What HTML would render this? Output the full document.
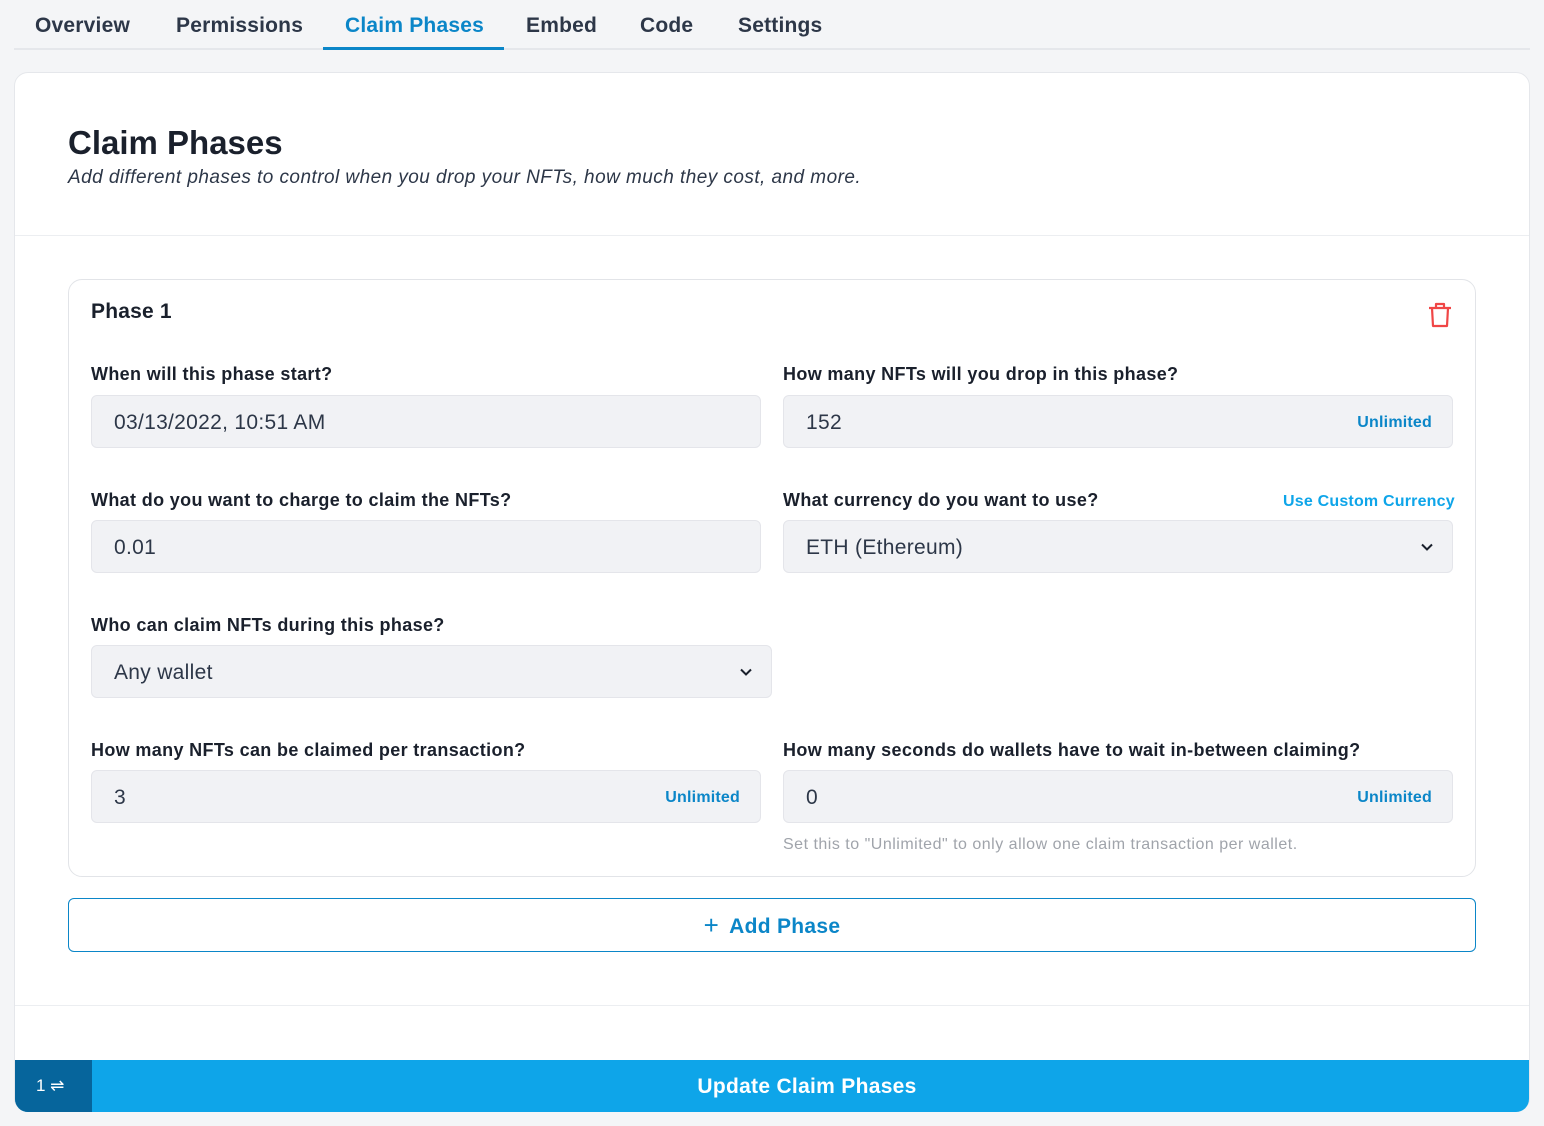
<!DOCTYPE html>
<html><head><meta charset="utf-8">
<style>
*{box-sizing:border-box;margin:0;padding:0}
body{width:1544px;height:1126px;background:#f4f5f7;font-family:"Liberation Sans",sans-serif;position:relative;overflow:hidden;color:#1a202c}
.a{position:absolute}
.tab{position:absolute;top:14px;font-size:21px;font-weight:600;color:#2d3748;letter-spacing:0.2px}
.card{left:14px;top:72px;width:1516px;height:1040px;background:#fff;border:1px solid #e5e7eb;border-radius:14px;overflow:hidden}
.lbl{position:absolute;font-size:18px;font-weight:700;color:#1a202c;letter-spacing:0.35px}
.inp{position:absolute;height:53px;background:#f1f2f5;border:1px solid #e4e5ea;border-radius:6px;font-size:21px;color:#2d3748;padding-left:22px;line-height:53px;letter-spacing:0.3px}
.unl{position:absolute;right:20px;top:0;font-size:16px;font-weight:700;color:#0b86c8;letter-spacing:0.2px}
.chev{position:absolute;right:18px;top:19px}
</style></head><body>
<div class="tab" style="left:35px">Overview</div>
<div class="tab" style="left:176px">Permissions</div>
<div class="tab" style="left:345px;color:#0b86c8">Claim Phases</div>
<div class="tab" style="left:526px">Embed</div>
<div class="tab" style="left:640px">Code</div>
<div class="tab" style="left:738px">Settings</div>
<div class="a" style="left:14px;top:48px;width:1516px;height:2px;background:#e5e7eb"></div>
<div class="a" style="left:323px;top:47px;width:181px;height:3px;background:#0b86c8"></div>

<div class="a card"></div>
<div class="a" style="left:68px;top:124px;font-size:33px;font-weight:700;color:#1a202c">Claim Phases</div>
<div class="a" style="left:68px;top:167px;font-size:19px;font-style:italic;color:#2d3748;letter-spacing:0.45px">Add different phases to control when you drop your NFTs, how much they cost, and more.</div>
<div class="a" style="left:15px;top:235px;width:1514px;height:1px;background:#eceef1"></div>

<div class="a" style="left:68px;top:279px;width:1408px;height:598px;border:1px solid #e2e4e8;border-radius:14px"></div>
<div class="a" style="left:91px;top:300px;font-size:21px;font-weight:700;color:#1a202c;letter-spacing:0.2px">Phase 1</div>
<svg class="a" style="left:1427px;top:301px" width="26" height="27" viewBox="0 0 26 27" fill="none" stroke="#f04646" stroke-width="2.2" stroke-linejoin="round"><path d="M2 7H24"/><path d="M9 7V3H17V7"/><path d="M5 7L6 25H20L21 7"/></svg>

<div class="lbl" style="left:91px;top:364px">When will this phase start?</div>
<div class="inp" style="left:91px;top:395px;width:670px">03/13/2022, 10:51 AM</div>
<div class="lbl" style="left:783px;top:364px">How many NFTs will you drop in this phase?</div>
<div class="inp" style="left:783px;top:395px;width:670px">152<span class="unl">Unlimited</span></div>

<div class="lbl" style="left:91px;top:490px">What do you want to charge to claim the NFTs?</div>
<div class="inp" style="left:91px;top:520px;width:670px">0.01</div>
<div class="lbl" style="left:783px;top:490px">What currency do you want to use?</div>
<div class="a" style="left:1283px;top:493px;font-size:16px;font-weight:700;color:#0ea5e9;letter-spacing:0.2px">Use Custom Currency</div>
<div class="inp" style="left:783px;top:520px;width:670px">ETH (Ethereum)<svg class="chev" width="14" height="14" viewBox="0 0 14 14" fill="none" stroke="#1a202c" stroke-width="2"><path d="M2 4.5L7 9.5L12 4.5"/></svg></div>

<div class="lbl" style="left:91px;top:615px">Who can claim NFTs during this phase?</div>
<div class="inp" style="left:91px;top:645px;width:681px">Any wallet<svg class="chev" width="14" height="14" viewBox="0 0 14 14" fill="none" stroke="#1a202c" stroke-width="2"><path d="M2 4.5L7 9.5L12 4.5"/></svg></div>

<div class="lbl" style="left:91px;top:740px">How many NFTs can be claimed per transaction?</div>
<div class="inp" style="left:91px;top:770px;width:670px">3<span class="unl">Unlimited</span></div>
<div class="lbl" style="left:783px;top:740px">How many seconds do wallets have to wait in-between claiming?</div>
<div class="inp" style="left:783px;top:770px;width:670px">0<span class="unl">Unlimited</span></div>
<div class="a" style="left:783px;top:836px;font-size:16px;color:#a0a4ab;letter-spacing:0.5px">Set this to "Unlimited" to only allow one claim transaction per wallet.</div>

<div class="a" style="left:68px;top:898px;width:1408px;height:54px;border:1px solid #0b86c8;border-radius:6px;text-align:center;line-height:50px;font-size:21px;font-weight:700;color:#0b86c8;letter-spacing:0.3px"><span style="font-weight:400;font-size:26px;margin-right:10px;position:relative;top:1px">+</span>Add Phase</div>

<div class="a" style="left:15px;top:1005px;width:1514px;height:1px;background:#eceef1"></div>
<div class="a" style="left:15px;top:1060px;width:1514px;height:52px;background:#0ea5e9;border-radius:0 0 13px 13px;overflow:hidden">
<div style="position:absolute;left:0;top:0;width:77px;height:52px;background:#06659c;color:#fff;font-size:17px;line-height:52px;padding-left:21px">1 ⇌</div>
<div style="position:absolute;left:0;right:0;top:0;text-align:center;line-height:54px;color:#fff;font-size:21px;font-weight:700;padding-left:70px;letter-spacing:0.3px">Update Claim Phases</div>
</div>
</body></html>
